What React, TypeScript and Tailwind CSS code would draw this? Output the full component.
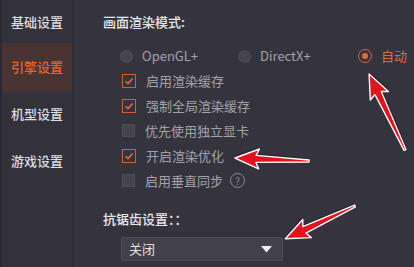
import React from "react";

const font = { fontFamily: '"Noto Sans CJK SC", "Noto Sans", sans-serif' };

const navItems = [
    { label: "基础设置", h: "h-[43px]" },
    { label: "引擎设置", h: "h-[48px]", active: true },
    { label: "机型设置", h: "h-[46px]" },
    { label: "游戏设置", h: "h-[47px]" },
];

const options = [
    { label: "启用渲染缓存", checked: true },
    { label: "强制全局渲染缓存", checked: true },
    { label: "优先使用独立显卡", checked: false },
    { label: "开启渲染优化", checked: true },
    { label: "启用垂直同步", checked: false, help: true },
];

function Radio({ label, selected }: { label: string; selected?: boolean }) {
    return (
        <div className="flex items-center gap-[9px]">
            {selected ? (
                <span className="w-[14px] h-[14px] rounded-full border border-[#d8643a] flex items-center justify-center">
                    <span className="w-[6px] h-[6px] rounded-full bg-[#e2683a]" />
                </span>
            ) : (
                <span className="w-[13px] h-[13px] rounded-full bg-[#46454f] border border-[#4f4e58]" />
            )}
            <span className={selected ? "text-[#e06a3c]" : "text-[#a3a2aa]"}>{label}</span>
        </div>
    );
}

function Check({ checked }: { checked: boolean }) {
    if (!checked) {
        return <span className="w-[13px] h-[13px] bg-[#45444e] border border-[#4e4d57]" />;
    }
    return (
        <span className="w-[14px] h-[14px] border border-[#c8623a] flex items-center justify-center">
            <svg width="10" height="10" viewBox="0 0 10 10" fill="none">
                <path d="M1.5 5.2 L4 7.6 L8.6 2.4" stroke="#e2703f" strokeWidth="1.5" />
            </svg>
        </span>
    );
}

function Arrow({ x, y, angle, len }: { x: number; y: number; angle: number; len: number }) {
    const L = len;
    const pts = `0,-1 ${L - 21},-3.5 ${L - 24},-10 ${L},0 ${L - 24},10 ${L - 21},3.5 0,1`;
    return (
        <g transform={`translate(${x} ${y}) rotate(${angle})`}>
            <polygon points={pts} fill="#000" opacity="0.25" transform="translate(1 2)" />
            <polygon points={pts} fill="#e3121b" stroke="#ffffff" strokeWidth="1.4" strokeLinejoin="round" />
        </g>
    );
}

export default function App() {
    return (
        <div className="relative w-[414px] h-[267px] flex bg-[#35343e] overflow-hidden" style={font}>
            {/* Sidebar */}
            <div className="w-[73px] shrink-0 bg-[#33323c] border-l-2 border-r border-l-[#2b2a33] border-r-[#2c2b33] flex flex-col text-[13px] font-medium">
                {navItems.map((item) => (
                    <div
                        key={item.label}
                        className={`${item.h} flex items-center justify-center ${item.active ? "bg-[#4a3431] text-[#e8652e]" : "text-[#dddde0]"}`}
                    >
                        {item.label}
                    </div>
                ))}
            </div>

            {/* Content */}
            <div className="flex-1 pl-[30px] pt-[12px] text-[13px]">
                <div className="h-[20px] leading-[20px] text-[#e8e8ea] font-medium">画面渲染模式:</div>
                <div className="mt-[12px] h-[24px] flex items-center pl-[17px]">
                    <div className="w-[118px]"><Radio label="OpenGL+" /></div>
                    <div className="w-[120px]"><Radio label="DirectX+" /></div>
                    <Radio label="自动" selected />
                </div>
                <div className="flex flex-col pl-[19px]">
                    {options.map((o) => (
                        <div key={o.label} className="h-[25px] flex items-center gap-[10px]">
                            <Check checked={o.checked} />
                            <span className="text-[#a3a2aa]">{o.label}</span>
                            {o.help && (
                                <span className="ml-[-3px] w-[15px] h-[15px] rounded-full border border-[#8c8b93] text-[#8c8b93] text-[10px] leading-none flex items-center justify-center">
                                    ?
                                </span>
                            )}
                        </div>
                    ))}
                </div>
                <div className="mt-[16px] h-[20px] leading-[20px] text-[#e8e8ea] font-medium">抗锯齿设置：：</div>
                <div className="mt-[8px] ml-[18px] w-[162px] h-[24px] rounded-[2px] bg-[#42414b] border border-[#4c4b55] flex items-center justify-between pl-[7px] pr-[10px]">
                    <span className="text-[#e2e2e4]">关闭</span>
                    <svg width="11" height="7" viewBox="0 0 11 7">
                        <path d="M0 0 H11 L5.5 6.5 Z" fill="#f0f0f2" />
                    </svg>
                </div>
            </div>

            {/* Annotation arrows */}
            <svg className="absolute inset-0 pointer-events-none" width="414" height="267">
                <Arrow x={405} y={150} angle={-115.3} len={84} />
                <Arrow x={309} y={161} angle={-177.7} len={74} />
                <Arrow x={355} y={206} angle={154.8} len={77} />
            </svg>
        </div>
    );
}
